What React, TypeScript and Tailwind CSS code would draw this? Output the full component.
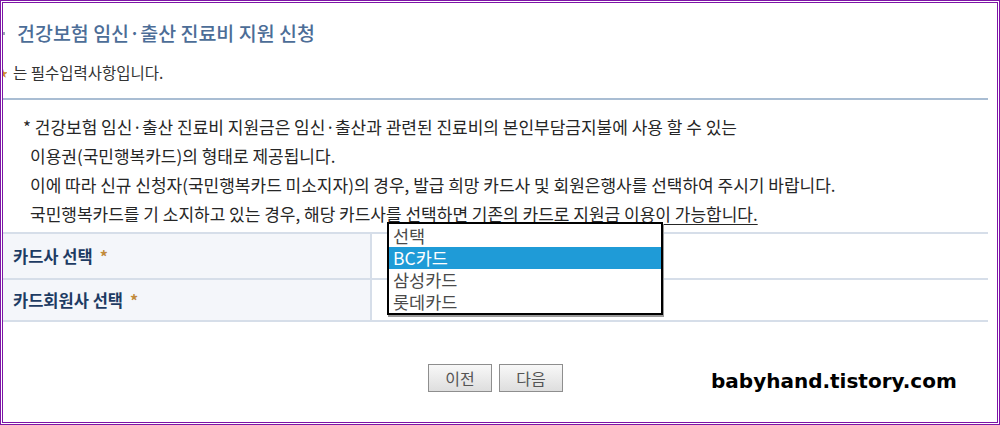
const NOTICE = [
  '이용권(국민행복카드)의 형태로 제공됩니다.',
  '이에 따라 신규 신청자(국민행복카드 미소지자)의 경우, 발급 희망 카드사 및 회원은행사를 선택하여 주시기 바랍니다.',
]

const CARD_OPTIONS = ['선택', 'BC카드', '삼성카드', '롯데카드']

function Star() {
  return <span className="ml-[7px] text-[16px] font-bold text-[#c28b3c]">*</span>
}

function FormRow({ label, height }: { label: string; height: string }) {
  return (
    <div className={`flex ${height} border-b-2 border-[#d6dee9]`}>
      <div className="flex w-[369px] items-center border-r-2 border-[#d6dee9] bg-[#f4f6fa] pl-[10px]">
        <span className="text-[16.5px] font-bold text-[#1d3b63]">{label}</span>
        <Star />
      </div>
      <div className="flex-1 bg-white" />
    </div>
  )
}

export default function App() {
  return (
    <div className="relative h-[425px] w-[1000px] overflow-hidden border-[3px] border-double border-[#7d14a6] bg-white font-['Noto_Sans_CJK_KR',sans-serif]">
      <div className="mr-[9px]">
        {/* Title */}
        <div className="flex h-[60px] items-center">
          <span className="h-[3px] w-[2px] bg-[#9aa6b5]" />
          <h1 className="ml-[12px] text-[19.5px] font-medium text-[#4c6d97]">
            건강보험 임신·출산 진료비 지원 신청
          </h1>
        </div>

        {/* Required notice */}
        <div className="flex h-[20px] items-center">
          <span className="w-[4px] overflow-hidden text-[10px] leading-none text-[#d08a2b]">
            <span className="-ml-[5px] inline-block">★</span>
          </span>
          <span className="ml-[6px] text-[15.5px] text-[#333]">는 필수입력사항입니다.</span>
        </div>

        <div className="mt-[15px] h-[2px] bg-[#a9bdd3]" />

        {/* Info text */}
        <div className="pt-[12px] pb-[4px] text-[17px] leading-[29px] text-[#262626]">
          <p className="pl-[20px]">* 건강보험 임신·출산 진료비 지원금은 임신·출산과 관련된 진료비의 본인부담금지불에 사용 할 수 있는</p>
          {NOTICE.map((line) => (
            <p key={line} className="pl-[27px]">
              {line}
            </p>
          ))}
          <p className="pl-[27px]">
            국민행복카드를 기 소지하고 있는 경우, 해당 카드사를{' '}
            <span className="underline underline-offset-[3px]">선택하면 기존의 카드로 지원금 이용이 가능합니다.</span>
          </p>
        </div>

        {/* Form table */}
        <div className="border-t-2 border-[#d6dee9]">
          <FormRow label="카드사 선택" height="h-[46px]" />
          <FormRow label="카드회원사 선택" height="h-[42px]" />
        </div>

        {/* Buttons */}
        <div className="mt-[42px] flex justify-center gap-[7px]">
          {['이전', '다음'].map((b) => (
            <button
              key={b}
              className="h-[28px] w-[64px] border border-[#8e8e8e] bg-gradient-to-b from-[#f8f8f8] to-[#dedede] text-[16px] text-[#555]"
            >
              {b}
            </button>
          ))}
        </div>
      </div>

      {/* Open select list */}
      <div className="absolute left-[384px] top-[219px] h-[93px] w-[276px] border-2 border-black bg-white pt-px shadow-[1px_2px_0_#9a9a9a]">
        {CARD_OPTIONS.map((opt) => (
          <div
            key={opt}
            className={`flex h-[22px] items-center pl-[4px] text-[17.5px] leading-none ${
              opt === 'BC카드' ? 'bg-[#1f9bd7] text-white' : 'text-[#4a4a4a]'
            }`}
          >
            {opt}
          </div>
        ))}
      </div>

      {/* Watermark */}
      <div className="absolute left-[708px] top-[363px] font-['DejaVu_Sans',sans-serif] text-[20px] font-bold text-black">
        babyhand.tistory.com
      </div>
    </div>
  )
}
